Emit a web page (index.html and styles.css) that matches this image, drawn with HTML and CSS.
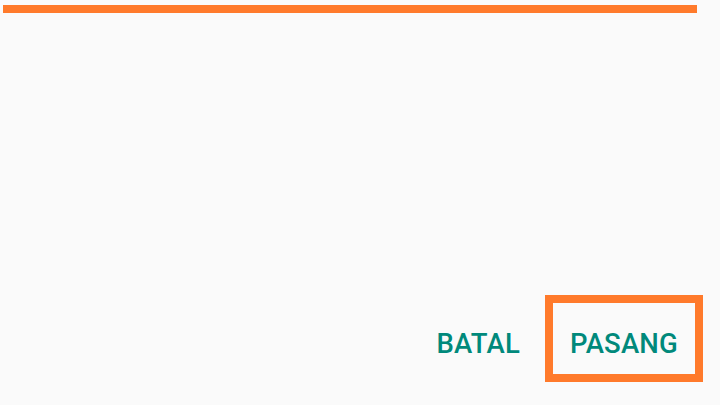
FILE: index.html
```html
<!DOCTYPE html>
<html>
<head>
<meta charset="utf-8">
<link rel="stylesheet" href="styles.css">
</head>
<body>
<div class="page">
  <div class="bar"></div>
  <div class="spacer"></div>
  <div class="actions">
    <span class="btn">BATAL</span>
    <span class="btn btn-focus">PASANG</span>
  </div>
</div>
</body>
</html>
```
FILE: styles.css
```css
html, body {
  margin: 0;
  padding: 0;
  background: #fafafa;
}
.page {
  width: 720px;
  height: 405px;
  display: flex;
  flex-direction: column;
  font-family: Roboto, "Liberation Sans", sans-serif;
}
.bar {
  height: 8px;
  margin: 5px 23px 0 3px;
  background: #ff7a2b;
}
.spacer {
  flex: 1;
}
.actions {
  display: flex;
  justify-content: flex-end;
  align-items: baseline;
  padding: 0 17px 23px 0;
}
.btn {
  color: #00897b;
  font-size: 27.5px;
  font-weight: 500;
  letter-spacing: 0.2px;
  line-height: 60px;
}
.btn-focus {
  margin-left: 25px;
  border: 8px solid #ff7a2b;
  padding: 11px 17px 0;
}
```
